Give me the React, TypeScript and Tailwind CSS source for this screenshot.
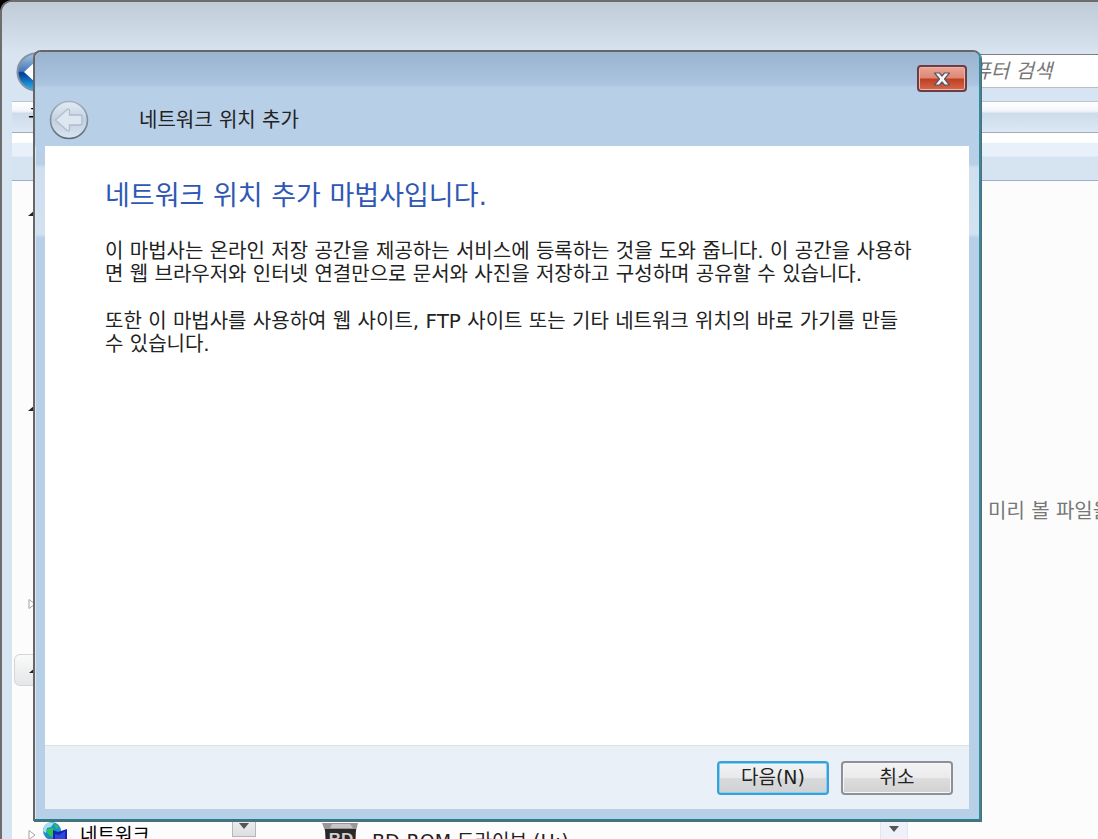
import clsx from "clsx";

type TreeItem = {
  id: string;
  label?: string;
  open?: boolean;
  selected?: boolean;
  spacing: string;
};

const treeItems: TreeItem[] = [
  { id: "favorites", open: true, spacing: "mt-4" },
  { id: "libraries", open: true, spacing: "mt-[163px]" },
  { id: "homegroup", spacing: "mt-[164px]" },
  { id: "computer", open: true, selected: true, spacing: "mt-[34px]" },
  { id: "network", label: "네트워크", spacing: "mt-[133px]" },
];

const TreeArrow = ({ open }: { open?: boolean }) => (
  <svg className="h-3 w-2 shrink-0" viewBox="0 0 8 12">
    {open ? (
      <path d="M7 3v6H0z" fill="#222" />
    ) : (
      <path d="M1 1.5v9L7 6z" fill="#fff" stroke="#a3a3a3" />
    )}
  </svg>
);

const NetworkIcon = () => (
  <svg className="h-7 w-7 shrink-0" viewBox="0 0 28 28">
    <circle cx="10" cy="10" r="9" fill="#1d8fd0" />
    <path d="M3 4c3-3 7-3 9-2l-3 4-4 1-1 5-3-2c0-2 1-4 2-6z" fill="#a5dff0" />
    <path d="M6 8l5-1 2 4-2 5-4-2-3-4zM12 2l5 4-3 2z" fill="#2bc84a" />
    <path d="M11 9l5 2 9-3v16l-14 1z" fill="#1423b4" />
    <path d="M13 13l4 1 6-4v8l-10 3z" fill="#2a49e0" />
  </svg>
);

const DriveIcon = () => (
  <svg className="h-9 w-10 shrink-0" viewBox="0 0 40 36">
    <path d="M2 0h36l-2 8H5z" fill="#9b9799" />
    <path d="M12 1h18l3 4H10z" fill="#c9c4c7" />
    <path d="M5 6h31l-1 22H6z" fill="#292929" />
    <path d="M0 20l6-4v6H0z" fill="#c9aeb2" />
    <text
      x="21"
      y="22"
      textAnchor="middle"
      fontFamily="Liberation Sans"
      fontWeight="700"
      fontSize="17"
      fill="#cfcfcf"
    >
      BD
    </text>
  </svg>
);

const ExplorerBackIcon = () => (
  <svg className="h-10 w-10" viewBox="0 0 40 40">
    <defs>
      <linearGradient id="orb" x1="0" y1="0" x2="0" y2="1">
        <stop offset="0" stopColor="#a9c6e2" />
        <stop offset="0.48" stopColor="#4478b8" />
        <stop offset="0.52" stopColor="#063c96" />
        <stop offset="1" stopColor="#24baf5" />
      </linearGradient>
    </defs>
    <circle cx="20" cy="20" r="18.5" fill="url(#orb)" stroke="#8492a3" strokeWidth="2" />
    <path d="M8 20L20 9v7h14v8H20v7z" fill="#fff" />
  </svg>
);

const WizardBackIcon = () => (
  <svg className="h-10 w-10" viewBox="0 0 40 40">
    <defs>
      <linearGradient id="glass" x1="0" y1="0" x2="0" y2="1">
        <stop offset="0" stopColor="#e3ecf5" />
        <stop offset="0.5" stopColor="#c2d1e1" />
        <stop offset="1" stopColor="#d8e5f1" />
      </linearGradient>
      <linearGradient id="rim" x1="0" y1="0" x2="0" y2="1">
        <stop offset="0" stopColor="#a5b2c0" />
        <stop offset="1" stopColor="#5f6a76" />
      </linearGradient>
    </defs>
    <circle cx="20" cy="20" r="18.5" fill="url(#glass)" stroke="url(#rim)" strokeWidth="1.6" />
    <path
      d="M6.500 20L18 9.500q3-1 2.500 2V15H31q2 0 2 2v6q0 2-2 2H20.500v4q0 3-2.500 1.500z"
      fill="#dde7f1"
      stroke="#b0bccb"
      strokeWidth="1.3"
    />
  </svg>
);

const CloseIcon = () => (
  <svg className="h-4 w-5" viewBox="0 0 20 16">
    <path
      d="M2.500 2h5L10 5l2.500-3h5l-5 6 5 6h-5L10 11l-2.500 3h-5l5-6z"
      fill="#f7f7f7"
      stroke="#5b5568"
      strokeWidth="1.2"
      strokeLinejoin="round"
    />
  </svg>
);

const Explorer = () => (
  <div className="flex h-full flex-col overflow-hidden rounded-tl-xl border-t-2 border-l-2 border-[#6d6d6d] bg-[#d7e4f1] pl-[10px]">
    <div className="-ml-[10px] flex h-[86px] shrink-0 items-end justify-between bg-linear-to-b from-[#bfcbd7] to-[#d8e4f0] to-60% pl-[14px]">
      <button type="button" aria-label="뒤로" className="-mb-1">
        <ExplorerBackIcon />
      </button>
      <input
        type="text"
        aria-label="컴퓨터 검색"
        placeholder="컴퓨터 검색"
        className="h-[34px] w-[150px] border-y border-t-[#7b7f84] border-b-[#b7bec6] bg-white pl-[6px] text-[20px] italic placeholder:text-[#777]"
      />
    </div>
    <div className="h-[13px] shrink-0" />
    <div className="h-8 shrink-0 border-y border-t-[#b9c4d0] border-b-[#a1adb9] bg-[linear-gradient(#fff,#f2f6fb_30%,#cddbea_38%,#dce8f4)] pl-4 text-[20px] leading-[30px]">
      구성
    </div>
    <div className="h-12 shrink-0 border-b border-[#9aafc8] bg-[linear-gradient(#fff_20%,#e8f0f9_22%,#e8f0f9_48%,#d6e4f2_52%)]" />
    <div className="flex min-h-0 flex-1 bg-[#fcfcfc]">
      <nav className="w-[220px] shrink-0 overflow-hidden pl-0.5">
        {treeItems.map((item) => (
          <div
            key={item.id}
            className={clsx(
              "flex h-8 items-center gap-1.5 pl-[14px] text-[19px]",
              item.spacing,
              item.selected &&
                "rounded-md border border-[#d5d5d5] bg-linear-to-b from-[#fafafa] to-[#e4e6e8]",
            )}
          >
            <TreeArrow open={item.open} />
            {item.label && (
              <>
                <NetworkIcon />
                <span className="pl-1">{item.label}</span>
              </>
            )}
          </div>
        ))}
      </nav>
      <div className="flex w-6 shrink-0 flex-col justify-end bg-[#f4f6f9] pb-0.5">
        <button
          type="button"
          aria-label="아래로 스크롤"
          className="flex h-6 justify-center border border-[#b5b8bc] bg-linear-to-b from-[#f4f4f4] to-[#dcdee0] pt-2"
        >
          <svg className="h-2 w-3" viewBox="0 0 12 8">
            <path d="M1 1h10L6 7z" fill="#555" />
          </svg>
        </button>
      </div>
      <main className="flex min-w-0 flex-1 flex-col justify-end overflow-hidden pl-16">
        <div className="-mb-5 flex h-9 shrink-0 items-center gap-3 text-[19px] text-[#222]">
          <DriveIcon />
          <span>BD-ROM 드라이브 (H:)</span>
        </div>
      </main>
      <div className="flex w-7 shrink-0 items-end justify-center border-x border-[#e0e6ee] bg-[#eef2f8] pb-1.5">
        <svg className="h-2 w-3" viewBox="0 0 12 8">
          <path d="M1 1h10L6 7z" fill="#555" />
        </svg>
      </div>
      <aside className="flex w-[190px] shrink-0 items-center overflow-hidden pt-0.5 pl-20 text-[20px] whitespace-nowrap text-[#777]">
        미리 볼 파일을
      </aside>
    </div>
  </div>
);

const Wizard = () => (
  <section
    role="dialog"
    aria-labelledby="wizard-name"
    className="absolute top-[50px] right-[117px] bottom-[18px] left-[33px] flex flex-col rounded-t-lg border-2 border-[#666] border-r-[#2a8ba3] border-b-[#247f91] bg-[linear-gradient(#b8cfe8_112px,#cfdff0_116px,#d3e2f1_182px,#b8cfe8_186px)] px-[10px] pb-[10px] shadow-[inset_1px_1px_#dbe8f4,1px_1px_#666]"
  >
    <header className="-mx-[10px] shrink-0 rounded-t-md bg-[linear-gradient(#9ab3ce,#abc3de_32px,#b8cfe8_36px)] pr-3 pl-[14px]">
      <div className="flex h-10 items-end justify-end">
        <button
          type="button"
          aria-label="닫기"
          className="flex h-[27px] w-[50px] items-center justify-center rounded-sm border-2 border-[#6d3d45] bg-[linear-gradient(#eaa597,#dd8672_48%,#bd3f22_52%,#d5694e)] shadow-[inset_0_0_0_1px_#efb6a8]"
        >
          <CloseIcon />
        </button>
      </div>
      <div className="flex h-[54px] items-center gap-[50px] pt-0.5">
        <button type="button" aria-label="뒤로" disabled>
          <WizardBackIcon />
        </button>
        <h1 id="wizard-name" className="text-[20px] text-[#222]">
          네트워크 위치 추가
        </h1>
      </div>
    </header>
    <div className="flex-1 bg-white px-[60px] pt-8">
      <h2 className="text-[27px] leading-9 text-[#2f58b5]">
        네트워크 위치 추가 마법사입니다.
      </h2>
      <div className="mt-[26px] flex flex-col gap-6 text-[20px] leading-[23px] whitespace-nowrap text-[#222]">
        <p>
          이 마법사는 온라인 저장 공간을 제공하는 서비스에 등록하는 것을 도와
          줍니다. 이 공간을 사용하
          <br />면 웹 브라우저와 인터넷 연결만으로 문서와 사진을 저장하고
          구성하며 공유할 수 있습니다.
        </p>
        <p>
          또한 이 마법사를 사용하여 웹 사이트, FTP 사이트 또는 기타 네트워크
          위치의 바로 가기를 만들
          <br />수 있습니다.
        </p>
      </div>
    </div>
    <footer className="flex h-16 shrink-0 items-center justify-end gap-3 border-t border-[#dcdfe3] bg-[#e9f0f8] px-4 text-[19px] text-[#222]">
      <button
        type="button"
        className="h-[34px] w-[112px] rounded-sm border-2 border-[#3f9fd4] bg-[linear-gradient(#f2f3f4,#e8e9eb_48%,#d8d9db_52%,#cfd2d4)] shadow-[inset_0_0_0_1px_#7fd4f5]"
      >
        다음(N)
      </button>
      <button
        type="button"
        className="h-[34px] w-[112px] rounded-sm border-2 border-[#8d9094] bg-[linear-gradient(#f3f3f3,#ebebeb_48%,#dddddd_52%,#d0d1d2)] shadow-[inset_0_0_0_1px_#f6f6f6]"
      >
        취소
      </button>
    </footer>
  </section>
);

export default function App() {
  return (
    <div className="relative h-screen overflow-hidden bg-black font-['DejaVu_Sans','Noto_Sans_CJK_KR',sans-serif]">
      <Explorer />
      <Wizard />
    </div>
  );
}
